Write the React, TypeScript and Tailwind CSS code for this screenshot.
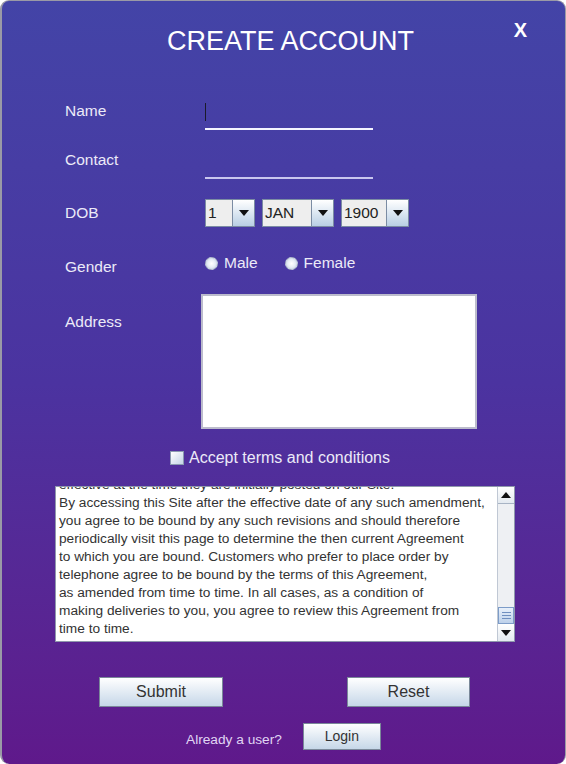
import React from "react";

const terms = [
  "effective at the time they are initially posted on our Site.",
  "By accessing this Site after the effective date of any such amendment,",
  "you agree to be bound by any such revisions and should therefore",
  "periodically visit this page to determine the then current Agreement",
  "to which you are bound. Customers who prefer to place order by",
  "telephone agree to be bound by the terms of this Agreement,",
  "as amended from time to time. In all cases, as a condition of",
  "making deliveries to you, you agree to review this Agreement from",
  "time to time.",
];

function Arrow({ up = false }: { up?: boolean }) {
  return (
    <svg width="10" height="6" viewBox="0 0 10 6">
      <path d={up ? "M0 6 L5 0 L10 6 Z" : "M0 0 L10 0 L5 6 Z"} fill="#111" />
    </svg>
  );
}

function Combo({ value, textW }: { value: string; textW: string }) {
  return (
    <div className="flex h-[28px] border border-[#7b8ca3]">
      <div
        className={`${textW} bg-[#eeeeee] border-r border-[#7b8ca3] pl-[2px] text-[15.5px] leading-[26px] text-[#222]`}
      >
        {value}
      </div>
      <div className="w-[21px] flex items-center justify-center bg-linear-to-b from-white to-[#b9cfe4]">
        <Arrow />
      </div>
    </div>
  );
}

function Radio({ label }: { label: string }) {
  return (
    <label className="flex items-center gap-[6px]">
      <span className="w-[13px] h-[13px] rounded-full border border-dashed border-[#aab4c4] bg-radial from-white via-[#e6edf5] to-[#a9bbd0]" />
      <span>{label}</span>
    </label>
  );
}

function GradButton({
  children,
  className,
}: {
  children: React.ReactNode;
  className: string;
}) {
  return (
    <button
      className={`${className} border border-[#7a8899] bg-linear-to-b from-white to-[#c6d7e8] text-[#333] flex items-center justify-center`}
    >
      {children}
    </button>
  );
}

export default function App() {
  return (
    <div className="w-[566px] h-[764px] bg-white font-['Liberation_Sans',Arial,sans-serif]">
      <div className="w-full h-full rounded-[9px] border-l-2 border-t border-r border-[#9a9aa6] bg-linear-to-b from-[#4344a7] via-[#4b33a0] to-[#5f198b] text-[#eceaf8] flex flex-col overflow-hidden">
        {/* header */}
        <div className="flex items-start pl-[165px] pr-[38px] pt-[25px] h-[55px]">
          <h1 className="text-[27px] leading-[30px] text-white">CREATE ACCOUNT</h1>
          <span className="ml-auto mt-[-8px] text-[20px] leading-[24px] font-bold text-white">
            X
          </span>
        </div>

        {/* form rows */}
        <div className="flex flex-col pl-[63px] mt-[42px] text-[15.5px] leading-[18px]">
          <div className="flex h-[32px]">
            <span className="w-[140px] mt-[4px]">Name</span>
            <div className="w-[168px] border-b-2 border-[#f4f4ff] pt-[5px]">
              <div className="w-px h-[18px] bg-[#1a1a2a]" />
            </div>
          </div>

          <div className="flex h-[32px] mt-[17px]">
            <span className="w-[140px] mt-[4px]">Contact</span>
            <div className="w-[168px] border-b-2 border-[#c9c6ee]" />
          </div>

          <div className="flex items-center h-[28px] mt-[20px]">
            <span className="w-[140px]">DOB</span>
            <div className="flex gap-[7px]">
              <Combo value="1" textW="w-[27px]" />
              <Combo value="JAN" textW="w-[49px]" />
              <Combo value="1900" textW="w-[45px]" />
            </div>
          </div>

          <div className="flex h-[18px] mt-[27px]">
            <span className="w-[140px] mt-[4px]">Gender</span>
            <div className="flex gap-[27px]">
              <Radio label="Male" />
              <Radio label="Female" />
            </div>
          </div>

          <div className="flex mt-[22px]">
            <span className="w-[136px] mt-[19px]">Address</span>
            <textarea className="w-[276px] h-[135px] bg-white border-2 border-[#bcbccc] resize-none outline-none" />
          </div>
        </div>

        {/* terms checkbox */}
        <label className="flex items-center h-[18px] gap-[5px] pl-[168px] mt-[20px] text-[16px] leading-[18px]">
          <span className="w-[14px] h-[14px] border border-[#8a9ab0] bg-linear-to-br from-white to-[#c3d3e6]" />
          <span>Accept terms and conditions</span>
        </label>

        {/* terms box */}
        <div className="ml-[53px] mt-[19px] h-[156px] w-[460px] flex bg-white border border-[#8f98ac]">
          <div className="flex-1 overflow-hidden pl-[3px]">
            <div className="mt-[-11px] text-[13.7px] leading-[18px] text-[#333]">
              {terms.map((t) => (
                <div key={t} className="whitespace-nowrap">
                  {t}
                </div>
              ))}
            </div>
          </div>
          <div className="w-[17px] flex flex-col bg-[#eef0f3] border-l border-[#c0c8d4]">
            <div className="h-[17px] flex items-center justify-center border-b border-[#a8b4c4] bg-linear-to-b from-white to-[#e4eaf0]">
              <Arrow up />
            </div>
            <div className="flex-1" />
            <div className="h-[17px] flex flex-col items-center justify-center gap-[2px] border border-[#7d9cc8] bg-linear-to-b from-[#e8f0fa] to-[#bcd0ea]">
              <span className="w-[9px] h-px bg-[#6f8fbf]" />
              <span className="w-[9px] h-px bg-[#6f8fbf]" />
              <span className="w-[9px] h-px bg-[#6f8fbf]" />
            </div>
            <div className="h-[17px] flex items-center justify-center bg-linear-to-b from-white to-[#e4eaf0]">
              <Arrow />
            </div>
          </div>
        </div>

        {/* action buttons */}
        <div className="flex pl-[97px] mt-[35px]">
          <GradButton className="w-[124px] h-[30px] text-[16px]">Submit</GradButton>
          <GradButton className="ml-[124px] w-[123px] h-[30px] text-[16px]">Reset</GradButton>
        </div>

        <div className="flex items-center pl-[184px] mt-[15px]">
          <span className="text-[13.7px] text-[#e0d6f4] mt-[8px]">Already a user?</span>
          <GradButton className="ml-[21px] w-[78px] h-[27px] text-[14px]">Login</GradButton>
        </div>
      </div>
    </div>
  );
}
